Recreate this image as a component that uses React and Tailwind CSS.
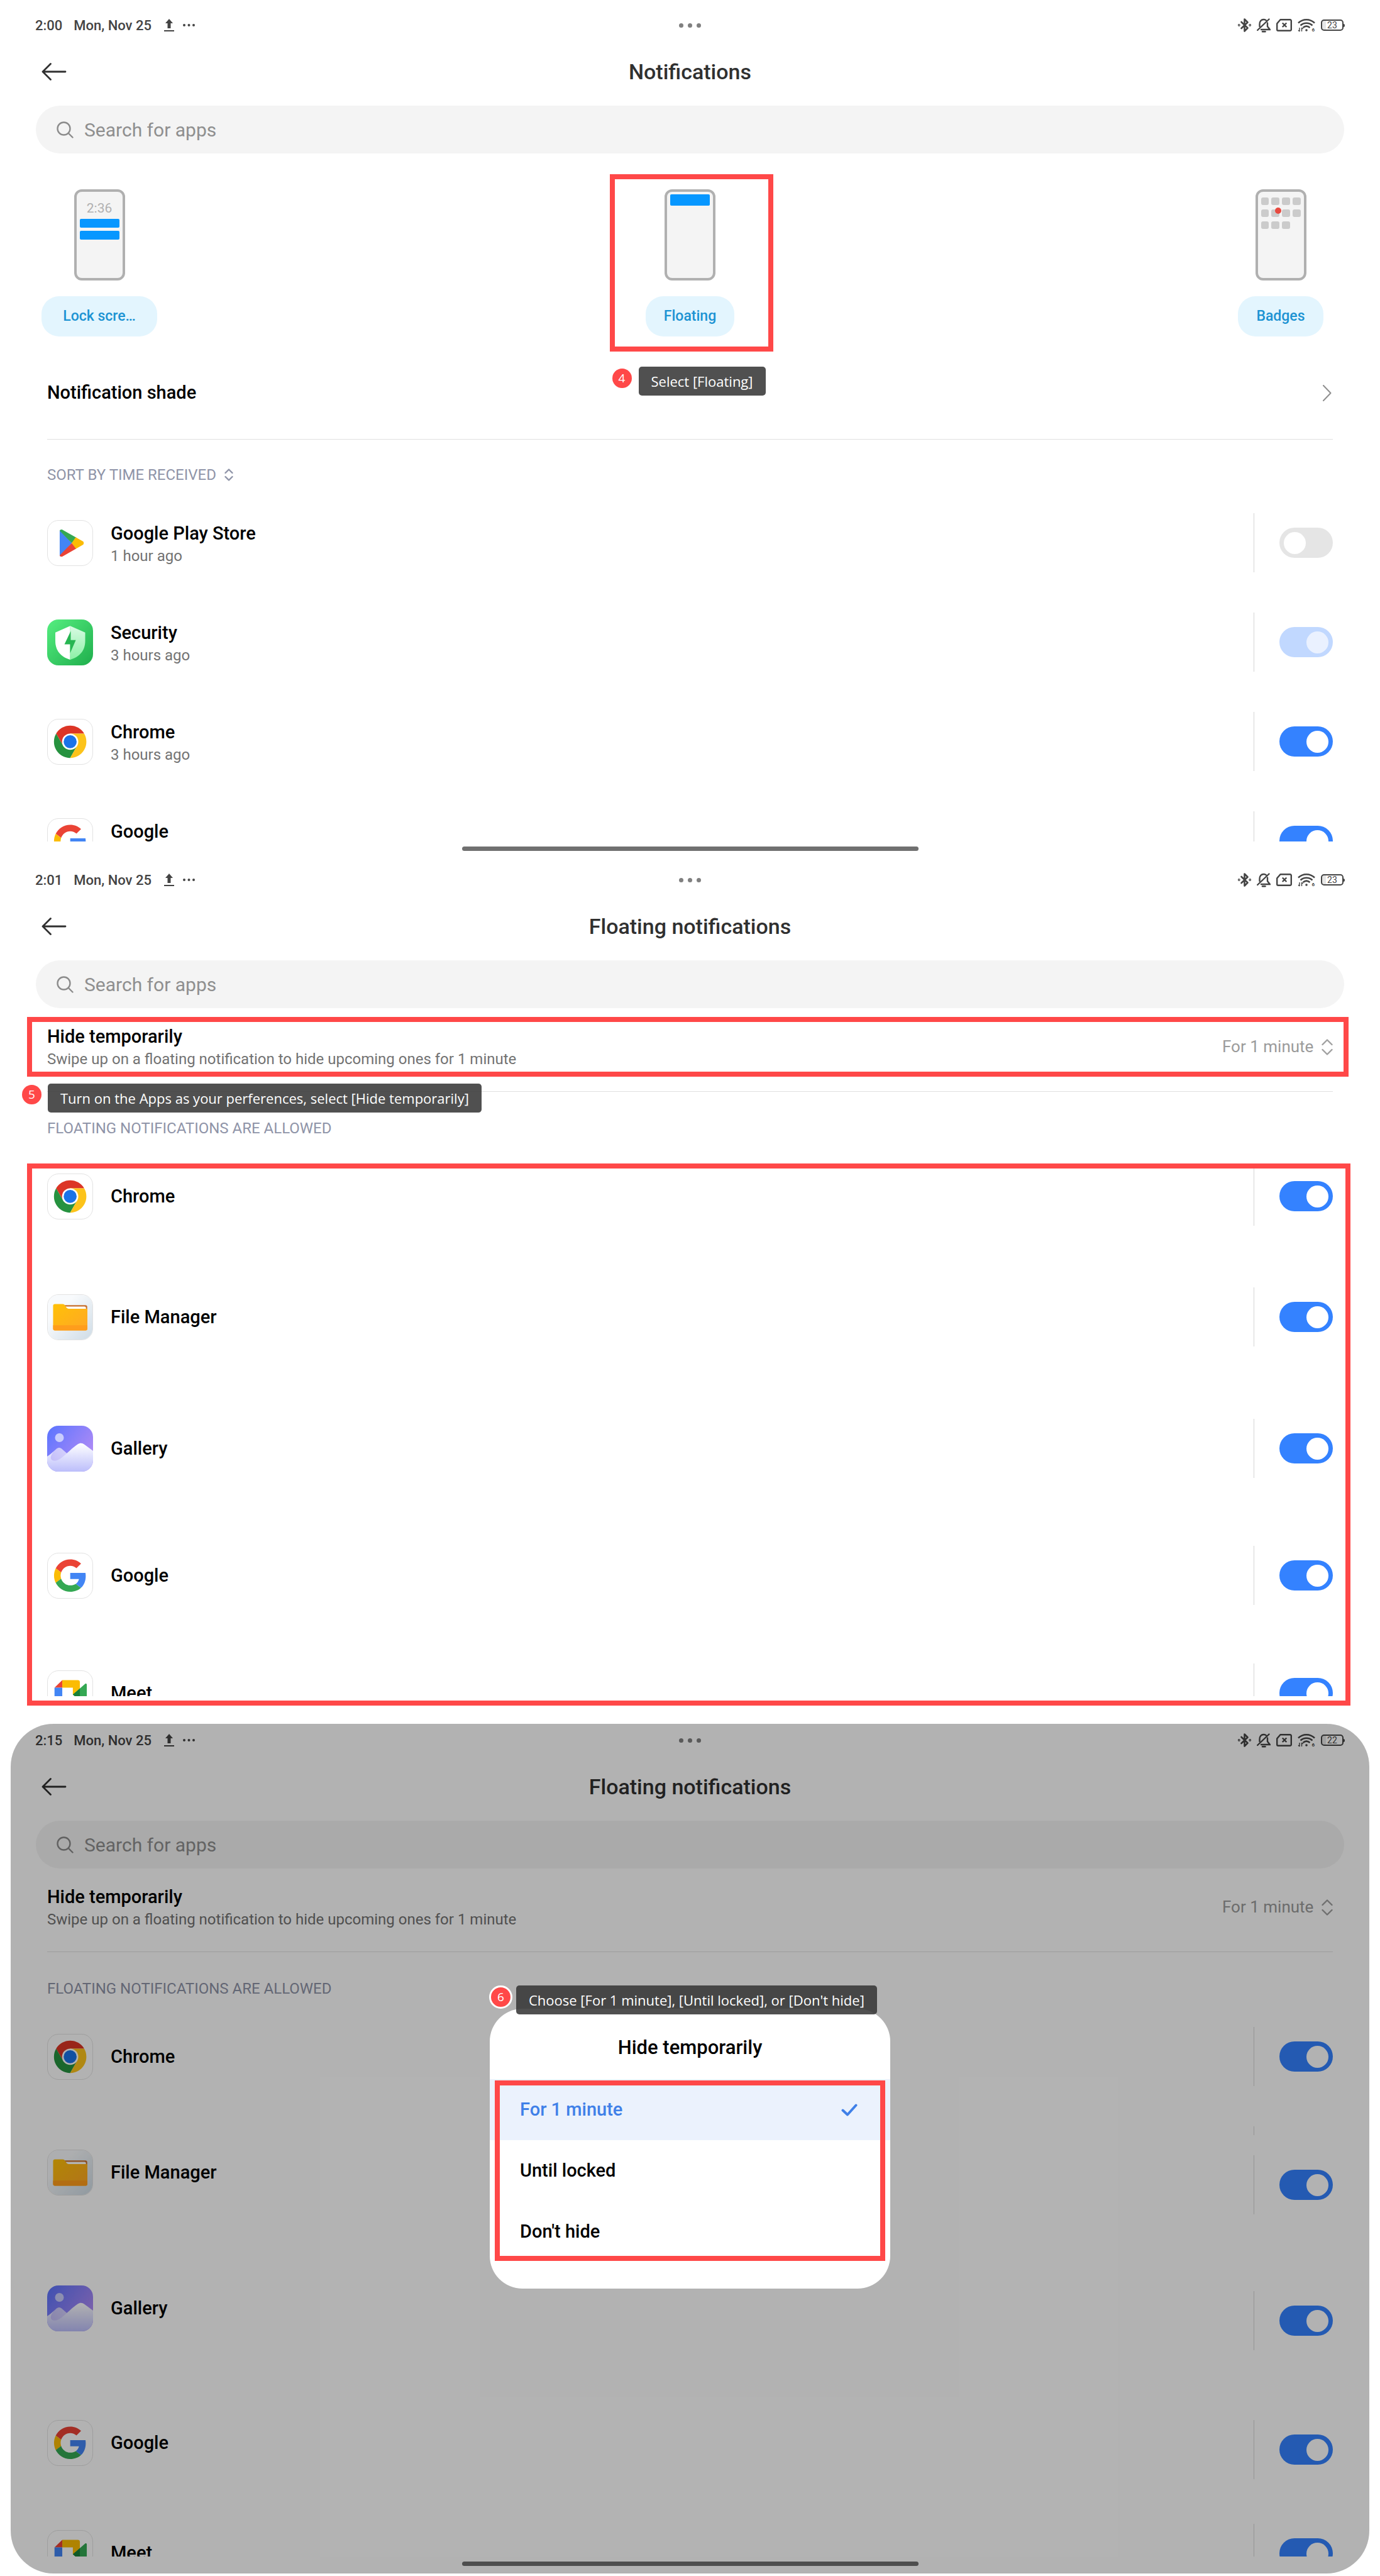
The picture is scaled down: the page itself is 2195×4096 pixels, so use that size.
import React from 'react';

const StatusIcons = ({ battery }) => (
    <div className="flex items-center justify-end gap-[9px]">
        <svg viewBox="0 0 21 24" className="w-[21px] h-6" fill="none" stroke="currentColor" strokeWidth="2.6" strokeLinejoin="round" strokeLinecap="round">
            <path d="M5.5 7 15.5 16.5 10.5 21.5V2.5L15.5 7.5 5.5 17" />
            <circle cx="1.8" cy="12" r="0.6" />
            <circle cx="19.2" cy="12" r="0.6" />
        </svg>
        <svg viewBox="0 0 22 23" className="w-[22px] h-[23px]" fill="none" stroke="currentColor" strokeWidth="2.4" strokeLinecap="round">
            <path d="M1.2 19 19.5 1.5" />
            <path d="M4.5 13V9.500C4.500 5 7 2 11 2c1.500 0 3 .5 4 1.500" />
            <path d="M17 7.500V13l3.800 5H7" />
            <path d="M9 21.300h4.500" />
        </svg>
        <svg viewBox="0 0 25 20" className="w-[25px] h-5" fill="none" stroke="currentColor" strokeWidth="2.400" strokeLinejoin="round">
            <path d="M6.500 1.200H22a1.800 1.800 0 0 1 1.800 1.800v14a1.800 1.800 0 0 1-1.800 1.800H3A1.800 1.800 0 0 1 1.200 17V7.500z" />
            <path d="m9.800 6.500 6.500 6.500m0-6.500-6.500 6.500" />
        </svg>
        <svg viewBox="0 0 28 21" className="w-7 h-[21px] overflow-visible" fill="none" stroke="currentColor" strokeWidth="2.500">
            <path d="M1 6.500C8.500-.5 19.500-.5 27 6.500" />
            <path d="M4.500 10.500c5.500-5 13.500-5 19 0" />
            <path d="M8.500 14c3.500-3 7.500-3 11 0" />
            <circle cx="14" cy="18" r="1.800" fill="currentColor" stroke="none" />
            <path d="M3 14v6m0 0-2-2M6.500 20v-6m0 0 2 2" strokeWidth="1.400" />
            <text x="22.500" y="20" fontSize="8" fontWeight="700" fill="currentColor" stroke="none">6</text>
        </svg>
        <div className="flex items-center">
            <div className="w-9 h-[18px] rounded-[5px] border-2 border-current flex items-center justify-center text-[14px] leading-none bg-linear-to-r from-black/10 from-20% to-transparent to-20%">
                {battery}
            </div>
            <div className="w-[2px] h-[5px] bg-current rounded-r-sm" />
        </div>
    </div>
);

const StatusBar = ({ time, battery }) => (
    <div className="grid grid-cols-3 items-center h-20 px-14 text-[#444444]">
        <div className="flex items-center text-[22px] font-medium">
            <span>{time}</span>
            <span className="ml-[18px]">Mon, Nov 25</span>
            <svg viewBox="0 0 16 20" className="ml-5 w-4 h-5" fill="currentColor">
                <path d="M8 0 14 7h-3.500v8h-5V7H2zM0 18h16v2H0z" />
            </svg>
            <svg viewBox="0 0 19 4" className="ml-[14px] w-[19px] h-1" fill="currentColor">
                <circle cx="2" cy="2" r="2" />
                <circle cx="9.500" cy="2" r="2" />
                <circle cx="17" cy="2" r="2" />
            </svg>
        </div>
        <div className="flex justify-center gap-[7px]">
            <span className="size-[7px] rounded-full bg-[#808080]" />
            <span className="size-[7px] rounded-full bg-[#808080]" />
            <span className="size-[7px] rounded-full bg-[#808080]" />
        </div>
        <StatusIcons battery={battery} />
    </div>
);

const Header = ({ title }) => (
    <header className="grid grid-cols-3 items-center h-[68px] px-[66px]">
        <button type="button" aria-label="Back" className="w-10 h-7">
            <svg viewBox="0 0 40 28" className="w-10 h-7" fill="none" stroke="#303030" strokeWidth="2.800" strokeLinecap="round" strokeLinejoin="round">
                <path d="M14.500 1.500 2 14l12.500 12.500M2 14h36" />
            </svg>
        </button>
        <h2 className="text-center text-[34px] leading-10 font-medium text-[#303030]">{title}</h2>
    </header>
);

const SearchBar = ({ id }) => (
    <div className="mx-[57px] mt-5 h-[76px] rounded-full bg-[#f4f4f4] flex items-center pl-[33px]">
        <svg viewBox="0 0 27 27" className="w-[27px] h-[27px] shrink-0" fill="none" stroke="#8c8c8c" strokeWidth="2.400" strokeLinecap="round">
            <circle cx="11.500" cy="11.500" r="10" />
            <path d="m19 19 6.500 6.500" />
        </svg>
        <input
            id={id}
            type="text"
            aria-label="Search for apps"
            placeholder="Search for apps"
            className="ml-[17px] flex-1 bg-transparent outline-none text-[30px] placeholder:text-[#8f8f8f]"
        />
    </div>
);

const PlayIcon = () => (
    <svg viewBox="0 0 73 73" className="size-full">
        <clipPath id="play-shape">
            <path d="M19.400 17.500c0-2.500 2.500-3.800 4.800-2.500L57 33.500c2.600 1.500 2.600 4.700 0 6.200L24.200 58.300c-2.300 1.300-4.800 0-4.800-2.500z" />
        </clipPath>
        <g clipPath="url(#play-shape)">
            <path d="M19 13v47l20.200-23.400z" fill="#4285f4" />
            <path d="M19 13h4L48 27l-8.800 9.600L19 16z" fill="#34a853" />
            <path d="M47 25 39.200 36.600 47 48l14-8v-8z" fill="#fbbc04" />
            <path d="M19 60h4l24-13-7.800-10.400L19 57z" fill="#ea4335" />
        </g>
    </svg>
);

const SecurityIcon = () => (
    <svg viewBox="0 0 73 73" className="size-full">
        <defs>
            <linearGradient id="security-bg" x1="0" y1="0" x2="1" y2="1">
                <stop offset="0" stopColor="#55ee80" />
                <stop offset="1" stopColor="#1fae4c" />
            </linearGradient>
            <linearGradient id="security-half" x1="0" y1="0" x2="0" y2="1">
                <stop offset="0" stopColor="#d9fbe3" />
                <stop offset="1" stopColor="#8cf0a6" />
            </linearGradient>
        </defs>
        <rect width="73" height="73" fill="url(#security-bg)" />
        <path d="M36.600 10.300 13 20.700V34c0 16 9 25.500 23.600 30z" fill="#ffffff" />
        <path d="M36.600 10.300 60.500 20.700V34c0 16-9.300 25.500-23.900 30z" fill="url(#security-half)" />
        <path d="M37.500 18.500 27.500 39.600h9.100v13.800l9-20.700h-8.100z" fill="#27b652" />
    </svg>
);

const ChromeIcon = () => (
    <svg viewBox="0 0 73 73" className="size-full">
        <path d="M13.650 23.150A26.500 26.500 0 0 1 59.550 23.150H36.600V36.400L25.130 43z" fill="#dc3526" />
        <path d="M13.650 23.150A26.500 26.500 0 0 0 36.600 62.900L48.070 43 36.600 36.400 25.130 43z" fill="#26923f" />
        <path d="M36.600 62.900A26.500 26.500 0 0 0 59.550 23.150H36.600V36.400L48.070 43z" fill="#fcc31a" />
        <circle cx="36.600" cy="36.400" r="13.300" fill="#ffffff" />
        <circle cx="36.600" cy="36.400" r="10.600" fill="#1a73e8" />
    </svg>
);

const GoogleIcon = () => (
    <svg viewBox="0 0 73 73" className="size-full">
        <g transform="translate(10.2 9.8) scale(1.104)">
            <path fill="#ea4335" d="M24 9.500c3.540 0 6.710 1.220 9.210 3.600l6.850-6.850C35.900 2.380 30.470 0 24 0 14.620 0 6.510 5.380 2.560 13.220l7.980 6.190C12.430 13.720 17.740 9.500 24 9.500z" />
            <path fill="#4285f4" d="M46.980 24.550c0-1.570-.15-3.090-.38-4.550H24v9.020h12.940c-.58 2.960-2.260 5.480-4.780 7.180l7.730 6c4.510-4.180 7.090-10.360 7.090-17.650z" />
            <path fill="#fbbc05" d="M10.530 28.590c-.48-1.450-.76-2.990-.76-4.590s.27-3.140.76-4.590l-7.980-6.190C.92 16.460 0 20.120 0 24c0 3.880.92 7.540 2.560 10.780l7.970-6.190z" />
            <path fill="#34a853" d="M24 48c6.480 0 11.930-2.130 15.890-5.810l-7.730-6c-2.150 1.450-4.920 2.300-8.160 2.300-6.260 0-11.570-4.220-13.470-9.910l-7.980 6.190C6.510 42.620 14.620 48 24 48z" />
        </g>
    </svg>
);

const FilesIcon = () => (
    <svg viewBox="0 0 73 73" className="size-full">
        <defs>
            <linearGradient id="files-bg" x1="0" y1="0" x2="1" y2="1">
                <stop offset="0.300" stopColor="#f8fafc" />
                <stop offset="1" stopColor="#cfdce6" />
            </linearGradient>
            <linearGradient id="files-body" x1="0" y1="0" x2="1" y2="1">
                <stop offset="0" stopColor="#ffc107" />
                <stop offset="1" stopColor="#ffa726" />
            </linearGradient>
        </defs>
        <rect width="73" height="73" fill="url(#files-bg)" />
        <path d="M26 16.600h35.500a3 3 0 0 1 3 3V30H26z" fill="#c8702e" />
        <path d="M28 19h32a2.500 2.500 0 0 1 2.500 2.500V30H28z" fill="#ffffff" />
        <path d="M12 14.800h12c3 0 3.800 1.500 5 3.500 1.500 2.800 2.500 4.200 5 4.200h30.800V55a3 3 0 0 1-3 3H11.700a3 3 0 0 1-3-3V18a3.200 3.200 0 0 1 3.300-3.200z" fill="url(#files-body)" />
        <path d="M8.700 49.700h56.100V55a3 3 0 0 1-3 3H11.700a3 3 0 0 1-3-3z" fill="#ff9d1c" />
    </svg>
);

const GalleryIcon = () => (
    <svg viewBox="0 0 73 73" className="size-full">
        <defs>
            <linearGradient id="gallery-sky" x1="0" y1="0" x2="1" y2="0.700">
                <stop offset="0" stopColor="#5a74ff" />
                <stop offset="1" stopColor="#b48cf5" />
            </linearGradient>
            <linearGradient id="gallery-hill" x1="0" y1="0" x2="0" y2="1">
                <stop offset="0" stopColor="#ffffff" />
                <stop offset="1" stopColor="#bcbefb" />
            </linearGradient>
            <linearGradient id="gallery-small" x1="0" y1="1" x2="1" y2="0">
                <stop offset="0" stopColor="#b9b2f7" />
                <stop offset="1" stopColor="#d9d6fd" />
            </linearGradient>
        </defs>
        <rect width="73" height="73" fill="url(#gallery-sky)" />
        <circle cx="19.500" cy="19" r="7" fill="#c9cdfd" />
        <path d="M0 49c6-4 10-8 15-12.500 3-2 5-2 8 0L36 48v25H0z" fill="url(#gallery-small)" />
        <path d="M0 49c5-3 8-6 11-9-4 5-7 10-4 14 3 3 10 2 16-3C32 44 40 35 48.500 29.500c4-2.500 7-2.500 11 .5L73 40v33H0z" fill="url(#gallery-hill)" />
    </svg>
);

const MeetIcon = () => (
    <svg viewBox="0 0 73 73" className="size-full">
        <path d="M23.700 15v12.200H11z" fill="#ea4335" />
        <path d="M11 27.200h12.700v19H11z" fill="#4285f4" />
        <path d="M23.700 15H49a3.500 3.500 0 0 1 3.500 3.500v20H41V27.200H23.700z" fill="#fbbc04" />
        <path d="M41 38.500 61 21c1.200-1 2.800-.3 2.800 1.200v31c0 1.500-1.600 2.300-2.800 1.300z" fill="#34a853" />
        <path d="M41 38.500 52.500 28.500v20z" fill="#188038" />
        <path d="M23.700 46.200H52.500v8.500a3.500 3.500 0 0 1-3.500 3.500H23.700z" fill="#34a853" />
        <path d="M11 46.200h12.700v12H14.500a3.500 3.500 0 0 1-3.500-3.500z" fill="#1967d2" />
    </svg>
);

const AppIcon = ({ children, bordered = true }) => (
    <span className={`block size-[73px] shrink-0 overflow-hidden rounded-[18px] bg-white ${bordered ? 'border border-[#e2e2e2]' : ''}`}>
        {children}
    </span>
);

// Labels and switches sit in two columns, each item carries its own gap to the one above.
const AppList = ({ prefix, apps }) => (
    <div className="flex justify-between overflow-hidden">
        <div className="flex flex-col">
            {apps.map((app) => (
                <label key={app.name} htmlFor={`${prefix}-${app.name}`} className={`flex items-center h-[94px] shrink-0 ${app.labelGap}`}>
                    <AppIcon bordered={app.bordered}>{app.icon}</AppIcon>
                    <span className={`flex flex-col ${app.time ? 'ml-7 pt-1' : 'ml-7'}`}>
                        <span className="text-[29px] leading-[38px] font-medium text-black">{app.name}</span>
                        {app.time && <span className="text-[24px] leading-[34px] text-[#737373]">{app.time}</span>}
                    </span>
                </label>
            ))}
        </div>
        <div className="flex flex-col">
            {apps.map((app) => (
                <React.Fragment key={app.name}>
                    {app.stub && <div className="mt-16 mb-8 h-[14px] shrink-0 border-l border-[#d4d4d4]" />}
                    <div className={`flex items-center h-[94px] shrink-0 border-l border-[#d4d4d4] pl-10 ${app.switchGap}`}>
                        <input
                            id={`${prefix}-${app.name}`}
                            type="checkbox"
                            role="switch"
                            defaultChecked={app.on}
                            disabled={app.locked}
                            className="appearance-none flex items-center w-[85px] h-12 px-[7px] rounded-full bg-[#e5e5e5] checked:bg-[#3482ff] checked:justify-end disabled:bg-[#c1d8ff] before:block before:size-[35px] before:rounded-full before:bg-white disabled:before:bg-[#eaf1ff]"
                        />
                    </div>
                </React.Fragment>
            ))}
        </div>
    </div>
);

const HomeBar = () => <div className="mx-auto mt-2 w-[726px] h-[7px] rounded-full bg-[#707070]" />;

const StepNumber = ({ children, className }) => (
    <span className={`absolute flex items-center justify-center size-[31px] rounded-full bg-[#ff4848] text-white text-[19px] leading-none font-['Open_Sans','Noto_Sans',sans-serif] ${className}`}>
        {children}
    </span>
);

const StepNote = ({ children, className }) => (
    <span className={`absolute flex items-center h-[46px] px-5 rounded-[5px] bg-[#363636]/87 text-white text-[22px] whitespace-nowrap font-['Open_Sans','Noto_Sans',sans-serif] ${className}`}>
        {children}
    </span>
);

const Highlight = ({ className }) => (
    <div className={`absolute border-8 border-[#ff4848] pointer-events-none ${className}`} />
);

const Phone = ({ children }) => (
    <span className="flex flex-col w-[81px] h-[145px] rounded-xl border-4 border-[#b0b0b0] bg-[#f4f4f4] px-[5px] pt-1">
        {children}
    </span>
);

const StyleTab = ({ label, wide = false, children }) => (
    <button type="button" className="relative flex flex-col items-center w-[184px]">
        {children}
        <span className={`mt-[25px] flex items-center justify-center h-16 rounded-[28px] bg-[#e3f5fe] text-[23px] font-medium text-[#1c93d3] ${wide ? 'w-full' : 'px-[29px]'}`}>
            {label}
        </span>
    </button>
);

const BADGE_CELLS = [0, 1, 2, 3, 4, 5, 6, 7, 8, 9, 10];

const NotificationsScreen = () => {
    const apps = [
        { name: 'Google Play Store', time: '1 hour ago', icon: <PlayIcon />, on: false },
        { name: 'Security', time: '3 hours ago', icon: <SecurityIcon />, on: true, locked: true, bordered: false, labelGap: 'mt-16', switchGap: 'mt-16' },
        { name: 'Chrome', time: '3 hours ago', icon: <ChromeIcon />, on: true, labelGap: 'mt-16', switchGap: 'mt-16' },
        { name: 'Google', time: '\u00a0', icon: <GoogleIcon />, on: true, labelGap: 'mt-16', switchGap: 'mt-16' },
    ];

    return (
        <section className="relative pb-1.5">
            <StatusBar time="2:00" battery="23" />
            <Header title="Notifications" />
            <SearchBar id="search-notifications" />
            <div className="mt-[57px] flex justify-between px-[66px]">
                <StyleTab label="Lock scre…" wide>
                    <Phone>
                        <span className="mt-2 text-center text-[21px] leading-7 text-[#b0b0b0]">2:36</span>
                        <span className="mt-[3px] h-[14px] rounded-xs bg-[#0797ff]" />
                        <span className="mt-[5px] h-[14px] rounded-xs bg-[#0797ff]" />
                    </Phone>
                </StyleTab>
                <div className="relative">
                    <StyleTab label="Floating">
                        <Phone>
                            <span className="h-[18px] rounded-xs bg-[#0797ff]" />
                        </Phone>
                    </StyleTab>
                    <Highlight className="-left-9 -right-10 -top-6 -bottom-6" />
                    <StepNumber className="-left-8 top-[285px]">4</StepNumber>
                    <StepNote className="left-[10px] top-[282px]">Select [Floating]</StepNote>
                </div>
                <StyleTab label="Badges">
                    <Phone>
                        <span className="relative mt-[5px] grid grid-cols-4 gap-x-1 gap-y-[7px]">
                            {BADGE_CELLS.map((cell) => (
                                <span key={cell} className="h-3 rounded-[3px] bg-[#cbcbcb]" />
                            ))}
                            <span className="absolute left-[22px] top-4 size-[10px] rounded-full bg-[#e84a40]" />
                        </span>
                    </Phone>
                </StyleTab>
            </div>
            <div className="mx-[75px]">
                <a href="#shade" className="mt-4 flex items-center justify-between h-[148px] border-b border-[#e0e0e0]">
                    <span className="text-[29px] font-medium text-black">Notification shade</span>
                    <svg viewBox="0 0 14 26" className="w-[14px] h-[26px] mr-[2px]" fill="none" stroke="#8f8f8f" strokeWidth="2" strokeLinecap="round" strokeLinejoin="round">
                        <path d="m1 1 11.500 12L1 25" />
                    </svg>
                </a>
                <button type="button" className="mt-10 flex items-center text-[24px] leading-8 text-[#8f94a8]">
                    SORT BY TIME RECEIVED
                    <svg viewBox="0 0 14 20" className="ml-[13px] w-[14px] h-5" fill="none" stroke="#8f94a8" strokeWidth="2.400" strokeLinecap="round" strokeLinejoin="round">
                        <path d="m1.500 7 5.500-5.500L12.500 7M1.500 13 7 18.500l5.500-5.500" />
                    </svg>
                </button>
                <div className="mt-[45px] h-[522px] overflow-hidden">
                    <AppList prefix="notifications" apps={apps} />
                </div>
            </div>
            <HomeBar />
        </section>
    );
};

const FloatingSettings = ({ prefix, apps, annotated = false }) => (
    <>
        <div className="relative mt-[14px] mx-[75px]">
            <div className="flex items-center justify-between h-[95px]">
                <div>
                    <p className="text-[29px] leading-[38px] font-medium text-black">Hide temporarily</p>
                    <p className="text-[24px] leading-[34px] text-[#737373]">Swipe up on a floating notification to hide upcoming ones for 1 minute</p>
                </div>
                <div className="flex items-center">
                    <select aria-label="Hide temporarily" defaultValue="For 1 minute" className="appearance-none bg-transparent text-[26px] text-[#9b9b9b]">
                        <option>For 1 minute</option>
                        <option>Until locked</option>
                        <option>Don't hide</option>
                    </select>
                    <svg viewBox="0 0 18 26" className="ml-3 w-[18px] h-[26px]" fill="none" stroke="#a0a0a0" strokeWidth="2.400" strokeLinecap="round" strokeLinejoin="round">
                        <path d="m1.500 9 7.500-7.500L16.500 9M1.500 17 9 24.500l7.500-7.500" />
                    </svg>
                </div>
            </div>
            {annotated && (
                <>
                    <Highlight className="-left-8 -right-[25px] inset-y-0" />
                    <StepNumber className="-left-10 top-[108px]">5</StepNumber>
                    <StepNote className="left-px top-[106px]">Turn on the Apps as your perferences, select [Hide temporarily]</StepNote>
                </>
            )}
        </div>
        <hr className="mt-[23px] mx-[75px] border-[#e0e0e0]" />
        <h3 className="mt-[42px] mx-[75px] text-[24px] leading-8 text-[#8f94a8]">FLOATING NOTIFICATIONS ARE ALLOWED</h3>
        <div className="relative mt-[45px] mx-[75px]">
            <div className="h-[842px] overflow-hidden">
                <AppList prefix={prefix} apps={apps} />
            </div>
            {annotated && <Highlight className="-left-8 -right-7 -top-[5px] -bottom-[15px]" />}
        </div>
        <HomeBar />
    </>
);

const FloatingScreen = () => {
    const apps = [
        { name: 'Chrome', icon: <ChromeIcon />, on: true },
        { name: 'File Manager', icon: <FilesIcon />, on: true, labelGap: 'mt-[98px]', switchGap: 'mt-[98px]' },
        { name: 'Gallery', icon: <GalleryIcon />, on: true, bordered: false, labelGap: 'mt-[115px]', switchGap: 'mt-[115px]' },
        { name: 'Google', icon: <GoogleIcon />, on: true, labelGap: 'mt-[108px]', switchGap: 'mt-[108px]' },
        { name: 'Meet', icon: <MeetIcon />, on: true, labelGap: 'mt-[93px]', switchGap: 'mt-[93px]' },
    ];

    return (
        <section className="relative pb-[15px]">
            <StatusBar time="2:01" battery="23" />
            <Header title="Floating notifications" />
            <SearchBar id="search-floating" />
            <FloatingSettings prefix="floating" apps={apps} annotated />
        </section>
    );
};

const HideDialog = () => {
    const options = ['For 1 minute', 'Until locked', "Don't hide"];

    return (
        <div role="dialog" aria-label="Hide temporarily" className="relative w-[637px] pb-[42px] rounded-[52px] bg-white">
            <h3 className="flex items-center justify-center h-28 pt-3 text-[31px] font-medium text-black">Hide temporarily</h3>
            <div className="relative">
                {options.map((option, index) => (
                    <label key={option} className="group flex items-center justify-between h-[97px] pl-12 pr-[52px] text-[29px] font-medium text-black has-checked:bg-[#ebf2fd] has-checked:text-[#3f80e8]">
                        {option}
                        <input type="radio" name="hide-duration" defaultChecked={index === 0} className="sr-only" />
                        <svg viewBox="0 0 26 20" className="invisible group-has-checked:visible w-[26px] h-5" fill="none" stroke="currentColor" strokeWidth="4" strokeLinecap="round" strokeLinejoin="round">
                            <path d="m2.500 10.500 7.500 7L23.500 2.500" />
                        </svg>
                    </label>
                ))}
                <Highlight className="inset-x-2 top-0.5 bottom-0.5" />
            </div>
            <StepNumber className="-left-px -top-[37px] box-content border-[3px] border-white">6</StepNumber>
            <StepNote className="left-[42px] -top-[37px]">Choose [For 1 minute], [Until locked], or [Don't hide]</StepNote>
        </div>
    );
};

const DialogScreen = () => {
    const apps = [
        { name: 'Chrome', icon: <ChromeIcon />, on: true },
        { name: 'File Manager', icon: <FilesIcon />, on: true, stub: true, labelGap: 'mt-[90px]' },
        { name: 'Gallery', icon: <GalleryIcon />, on: true, bordered: false, labelGap: 'mt-[122px]', switchGap: 'mt-[122px]' },
        { name: 'Google', icon: <GoogleIcon />, on: true, labelGap: 'mt-[120px]', switchGap: 'mt-[111px]' },
        { name: 'Meet', icon: <MeetIcon />, on: true, labelGap: 'mt-[81px]', switchGap: 'mt-[71px]' },
    ];

    return (
        <section className="relative pb-4">
            <StatusBar time="2:15" battery="22" />
            <Header title="Floating notifications" />
            <SearchBar id="search-dialog" />
            <FloatingSettings prefix="dialog" apps={apps} />
            <div className="absolute inset-x-[17px] top-[14px] bottom-1 rounded-[68px] bg-black/30" />
            <div className="absolute inset-x-0 top-[467px] flex justify-center">
                <HideDialog />
            </div>
        </section>
    );
};

const App = () => (
    <main className="bg-white font-[Roboto,'Noto_Sans',sans-serif]">
        <NotificationsScreen />
        <FloatingScreen />
        <DialogScreen />
    </main>
);

export default App;
